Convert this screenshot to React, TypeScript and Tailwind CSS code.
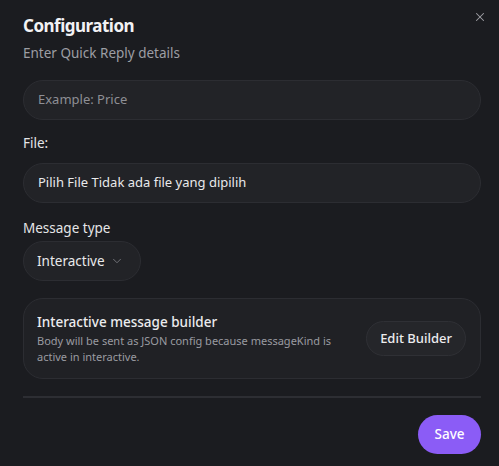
import React from "react";
import { ChevronDown, X } from "lucide-react";

export default function App() {
  return (
    <div
      className="relative h-[466px] w-[499px] bg-[#1b1c20] pl-[23px] pr-[18px] pt-[14px] text-[#e5e5e7]"
      style={{ fontFamily: '"Noto Sans", "Open Sans", sans-serif' }}
    >
      <button className="absolute right-[12px] top-[10px] text-[#a1a1a6]">
        <X className="h-[14px] w-[14px]" strokeWidth={1.75} />
      </button>

      <h2 className="text-[17px] font-bold leading-[24px] tracking-[-0.5px] text-[#f2f2f4]">
        Configuration
      </h2>
      <p className="mt-[5px] text-[13.5px] leading-[20px] text-[#9d9ea4]">
        Enter Quick Reply details
      </p>

      <div className="mt-[17px] flex h-[40px] items-center rounded-full border border-[#2c2d32] bg-[#222327] px-[14px] text-[13px] text-[#8e8f95]">
        Example: Price
      </div>

      <label className="mt-[13px] block text-[13.5px] leading-[20px] text-[#e5e5e7]">
        File:
      </label>
      <div className="mt-[10px] flex h-[40px] items-center rounded-full border border-[#2c2d32] bg-[#222327] px-[14px] text-[13px] text-[#e9e9eb]">
        Pilih File Tidak ada file yang dipilih
      </div>

      <label className="mt-[15px] block text-[13.5px] leading-[20px] text-[#e5e5e7]">
        Message type
      </label>
      <div className="mt-[3px] flex h-[40px] w-[118px] items-center justify-between rounded-full border border-[#2c2d32] bg-[#222327] pl-[13px] pr-[16px] text-[13.5px] text-[#e9e9eb]">
        <span>Interactive</span>
        <ChevronDown className="h-[14px] w-[14px] text-[#7a7b81]" strokeWidth={1.5} />
      </div>

      <div className="mt-[17px] flex h-[81px] items-center justify-between rounded-[20px] border border-[#2c2d32] bg-[#202125] pl-[13px] pr-[14px]">
        <div className="w-[320px]">
          <div className="text-[13.5px] font-medium leading-[18px] text-[#ececee]">
            Interactive message builder
          </div>
          <div className="mt-[2px] text-[11px] leading-[16px] text-[#9a9ba1]">
            Body will be sent as JSON config because messageKind is active in interactive.
          </div>
        </div>
        <button className="flex h-[35px] items-center rounded-full border border-[#2f3035] bg-[#25262a] px-[13px] text-[13px] font-medium text-[#ececee]">
          Edit Builder
        </button>
      </div>

      <div className="mt-[17px] h-[2px] w-full bg-[#2d2e33]" />

      <div className="mt-[17px] flex justify-end">
        <button className="flex h-[39px] w-[63px] items-center justify-center rounded-full bg-[#8b5cf6] text-[13.5px] font-medium text-white">
          Save
        </button>
      </div>
    </div>
  );
}
